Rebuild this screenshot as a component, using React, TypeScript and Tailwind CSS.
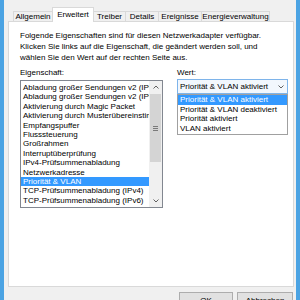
import React from "react";

const props = [
  "Abladung großer Sendungen v2 (IPv4)",
  "Abladung großer Sendungen v2 (IPv6)",
  "Aktivierung durch Magic Packet",
  "Aktivierung durch Musterübereinstimmung",
  "Empfangspuffer",
  "Flusssteuerung",
  "Großrahmen",
  "Interruptüberprüfung",
  "IPv4-Prüfsummenabladung",
  "Netzwerkadresse",
  "Priorität & VLAN",
  "TCP-Prüfsummenabladung (IPv4)",
  "TCP-Prüfsummenabladung (IPv6)",
];

const values = [
  "Priorität & VLAN aktiviert",
  "Priorität & VLAN deaktiviert",
  "Priorität aktiviert",
  "VLAN aktiviert",
];

function Chevron({ up }: { up?: boolean }) {
  return (
    <svg width="6" height="4" viewBox="0 0 6 4">
      <path
        d={up ? "M0.5 3.5 L3 1 L5.5 3.5" : "M0.5 0.5 L3 3 L5.5 0.5"}
        fill="none"
        stroke="#606060"
        strokeWidth="1"
      />
    </svg>
  );
}

export default function App() {
  const tabs = [
    { label: "Allgemein", w: "w-[40px]" },
    { label: "Erweitert", w: "w-[42px]", active: true },
    { label: "Treiber", w: "w-[33px]" },
    { label: "Details", w: "w-[34px]" },
    { label: "Ereignisse", w: "w-[44px]" },
    { label: "Energieverwaltung", w: "w-[69px]" },
  ];
  return (
    <div className="w-[300px] h-[300px] overflow-hidden flex bg-[#f0f0f0] font-['Liberation_Sans',Arial,sans-serif] text-[8px] text-black">
      <div className="w-[4px] shrink-0 bg-[#4ba3e3]" />
      <div className="flex-1 flex flex-col pt-[7px]">
        <div className="relative z-10 flex items-end h-[14px] pl-[9px]">
          {tabs.map((t, i) =>
            t.active ? (
              <div
                key={t.label}
                className={`${t.w} ${i > 0 ? "-ml-px" : ""} relative z-10 h-[15px] -mb-px bg-white border border-b-0 border-[#d9d9d9] flex items-center justify-center whitespace-nowrap leading-none`}
              >
                {t.label}
              </div>
            ) : (
              <div
                key={t.label}
                className={`${t.w} ${i > 0 ? "-ml-px" : ""} h-[10px] bg-[#f0f0f0] border border-b-0 border-[#d9d9d9] flex items-center justify-center whitespace-nowrap leading-none`}
              >
                {t.label}
              </div>
            )
          )}
        </div>
        <div className="ml-[4px] w-[286px] h-[266px] shrink-0 bg-white border border-[#d9d9d9] pt-[8px] pl-[11px]">
          <div className="leading-[11px] whitespace-nowrap">
            <div>Folgende Eigenschaften sind für diesen Netzwerkadapter verfügbar.</div>
            <div>Klicken Sie links auf die Eigenschaft, die geändert werden soll, und</div>
            <div>wählen Sie den Wert auf der rechten Seite aus.</div>
          </div>
          <div className="flex mt-[4px]">
            <div className="w-[143px] flex flex-col">
              <div className="leading-[11px]">Eigenschaft:</div>
              <div className="mt-[2px] h-[128px] border border-[#828790] flex">
                <div className="flex-1 overflow-hidden pt-[2px]">
                  {props.map((p) => (
                    <div
                      key={p}
                      className={`h-[9.4px] leading-[9.4px] pl-[2px] whitespace-nowrap overflow-hidden ${
                        p === "Priorität & VLAN" ? "bg-[#3399ff] text-white" : ""
                      }`}
                    >
                      {p}
                    </div>
                  ))}
                </div>
                <div className="w-[13px] shrink-0 bg-[#f0f0f0] flex flex-col">
                  <div className="h-[12px] flex items-center justify-center">
                    <Chevron up />
                  </div>
                  <div className="mt-[1px] mx-[1px] h-[68px] bg-[#d4d4d4] flex items-center justify-center">
                    <svg width="5" height="5" viewBox="0 0 5 5">
                      <path d="M0 0.5 H5 M0 2.5 H5 M0 4.5 H5" stroke="#7a7a7a" strokeWidth="1" />
                    </svg>
                  </div>
                  <div className="flex-1" />
                  <div className="h-[12px] flex items-center justify-center">
                    <Chevron />
                  </div>
                </div>
              </div>
            </div>
            <div className="ml-[14px] w-[111px] flex flex-col">
              <div className="leading-[11px]">Wert:</div>
              <div className="mt-[1px] h-[15px] border border-[#7eb4ea] bg-[#f2f7fd] flex items-center justify-between pl-[2px] pr-[3px] whitespace-nowrap">
                <span>Priorität &amp; VLAN aktiviert</span>
                <Chevron />
              </div>
              <div className="border border-[#a0a0a0] bg-white pb-[1px]">
                {values.map((v, i) => (
                  <div
                    key={v}
                    className={`h-[9.6px] leading-[9.6px] pl-[2px] whitespace-nowrap ${
                      i === 0 ? "bg-[#3399ff] text-white" : ""
                    }`}
                  >
                    {v}
                  </div>
                ))}
              </div>
            </div>
          </div>
        </div>
        <div className="flex justify-end gap-[4px] pr-[3px] mt-[5px]">
          <div className="w-[54px] h-[17px] shrink-0 border border-[#adadad] bg-[#e1e1e1] flex items-center justify-center">
            OK
          </div>
          <div className="w-[56px] h-[17px] shrink-0 border border-[#adadad] bg-[#e1e1e1] flex items-center justify-center">
            Abbrechen
          </div>
        </div>
      </div>
      <div className="w-[4px] shrink-0 bg-[#4ba3e3]" />
    </div>
  );
}
